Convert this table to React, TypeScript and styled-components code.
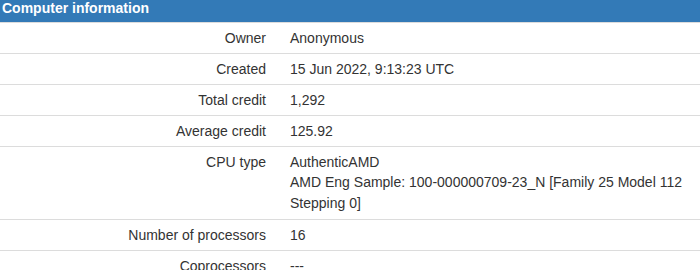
import React from "react";
import styled, { createGlobalStyle } from "styled-components";

const GlobalStyle = createGlobalStyle`
  html, body { margin: 0; padding: 0; background: #fff; }
  body { font-family: "Liberation Sans", Arial, sans-serif; font-size: 14px; color: #333; }
`;

const Panel = styled.section`
  width: 700px;
  display: flex;
  flex-direction: column;
`;

const Heading = styled.header`
  height: 22px;
  box-sizing: border-box;
  background: #337ab7;
  color: #fff;
  font-weight: bold;
  font-size: 14px;
  line-height: 16px;
  padding: 0 0 6px 2px;
`;

const Table = styled.div`
  display: grid;
  grid-template-columns: 278px 1fr;
`;

const Row = styled.div`
  display: contents;
`;

const Cell = styled.div<{ $label?: boolean; $multi?: boolean }>`
  border-top: 1px solid #dcdcdc;
  padding: 5px 12px;
  padding-bottom: ${(p) => (p.$multi ? "6px" : "5px")};
  line-height: ${(p) => (p.$multi ? "20.4px" : "20px")};
  text-align: ${(p) => (p.$label ? "right" : "left")};
  padding-right: ${(p) => (p.$label ? "12px" : "14px")};
`;

type RowData = { label: string; value: React.ReactNode; multi?: boolean };

const rows: RowData[] = [
  { label: "Owner", value: "Anonymous" },
  { label: "Created", value: "15 Jun 2022, 9:13:23 UTC" },
  { label: "Total credit", value: "1,292" },
  { label: "Average credit", value: "125.92" },
  {
    label: "CPU type",
    multi: true,
    value: (
      <>
        AuthenticAMD
        <br />
        AMD Eng Sample: 100-000000709-23_N [Family 25 Model 112 Stepping 0]
      </>
    ),
  },
  { label: "Number of processors", value: "16" },
  { label: "Coprocessors", value: "---" },
];

export default function App() {
  return (
    <>
      <GlobalStyle />
      <Panel>
        <Heading>Computer information</Heading>
        <Table>
          {rows.map((r) => (
            <Row key={r.label}>
              <Cell $label $multi={r.multi}>
                {r.label}
              </Cell>
              <Cell $multi={r.multi}>{r.value}</Cell>
            </Row>
          ))}
        </Table>
      </Panel>
    </>
  );
}
